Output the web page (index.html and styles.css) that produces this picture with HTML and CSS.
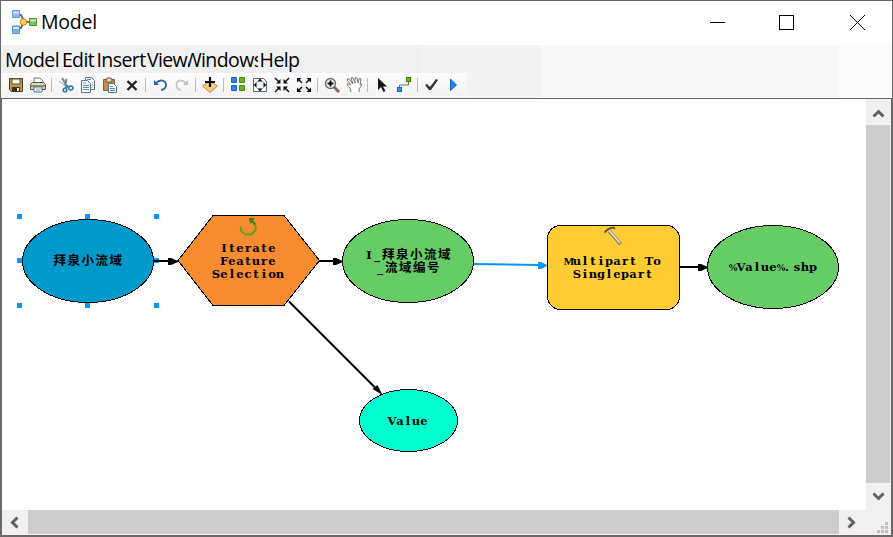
FILE: index.html
```html
<!DOCTYPE html>
<html lang="en">
<head>
<meta charset="utf-8">
<title>Model</title>
<link rel="stylesheet" href="styles.css">
</head>
<body>
<div class="window">
  <header class="titlebar">
    <svg class="logo" width="26" height="26" viewBox="0 0 26 26">
      <path d="M8 6h2l3 6-3 7H8M14 13h6" fill="none" stroke="#526b7c" stroke-width="1.800"/>
      <path d="M1.500 1.500h7v7h-7z" fill="#8fc1ee" stroke="#5f9bd2"/>
      <path d="M1.500 17h7v7.500h-7z" fill="#79b3e9" stroke="#4f8fcb"/>
      <path d="M2 3.500h6M2 19h6" stroke="#d0e8fb" stroke-width="2"/>
      <circle cx="12.500" cy="13" r="3.300" fill="#ffd24c" stroke="#b98518"/>
      <path d="M18.500 9.500h7v7h-7z" fill="#78bf59" stroke="#4a9436"/>
      <path d="M19 11.500h6" stroke="#c2e8ae" stroke-width="2"/>
    </svg>
    <h1 class="title">Model</h1>
    <div class="controls">
      <svg width="70" height="44" viewBox="0 0 70 44"><path d="M28 21.500h15"/></svg>
      <svg width="70" height="44" viewBox="0 0 70 44"><rect x="27.500" y="14.500" width="14" height="14"/></svg>
      <svg width="70" height="44" viewBox="0 0 70 44"><path d="M28 14l15 15M43 14L28 29"/></svg>
    </div>
  </header>
  <nav class="menu">
    <span class="m-model">Model</span><span class="m-edit">Edit</span><span class="m-insert">Insert</span><span class="m-view">View</span><span class="m-windows">Windows</span><span class="m-help">Help</span>
  </nav>
  <div class="toolrow">
    <div class="toolbar">
      <svg viewBox="0 0 16 16"><path d="M1.500 1.500h13v13h-11l-2-2z" fill="#b49b45" stroke="#493d20"/><path d="M4 2h8v5H4z" fill="#f4f4ee" stroke="#665a34"/><path d="M4 10h8v4H4z" fill="#342d20"/><path d="M9 11h2v3H9z" fill="#fff"/></svg>
      <svg viewBox="0 0 16 16"><path d="M4 7V1h6l3 3v3" fill="#fff" stroke="#6c7580"/><path d="M.500 7.500l2-2h11l2 2v5H.500z" fill="#d8d7b8" stroke="#54533f"/><path d="M1 9h14" stroke="#44443a"/><path d="M4 10h8v5H4z" fill="#fff" stroke="#596d80"/><path d="M6 12h5M6 14h4" stroke="#69a4dd"/></svg>
      <i class="sep"></i>
      <svg viewBox="0 0 16 16"><path d="M4 1l6 10M8.500 2L7 9" fill="none" stroke="#7d858c" stroke-width="2"/><path d="M1 4l8 6" stroke="#a0a5a8"/><circle cx="7" cy="13" r="1.800" fill="none" stroke="#2877b8" stroke-width="1.500"/><circle cx="12.800" cy="11" r="2" fill="none" stroke="#2877b8" stroke-width="1.500"/><path d="M7 11l2-2 2 1" fill="none" stroke="#2877b8" stroke-width="1.500"/></svg>
      <svg viewBox="0 0 16 16"><g fill="#fff" stroke="#60717f"><path d="M5.500.500h6l3 3v9h-9z"/><path d="M1.500 3.500h6l3 3v9h-9z"/></g><path d="M3 6h3M3 8.500h6M3 10.500h6M3 12.500h6M7 2.500h4M12 6h1M12 8h1M12 10h1" stroke="#4b95ca"/></svg>
      <svg viewBox="0 0 16 16"><path d="M1.500 2.500h11v11h-11z" fill="#c98d4b" stroke="#8f5b29"/><path d="M4 3l1-2h4l1 2v2H4z" fill="#e7d9b8" stroke="#785632"/><path d="M6.500 6.500h5l3 3v6h-8z" fill="#fff" stroke="#587084"/><path d="M8 9.500h3M8 11.500h5M8 13.500h5" stroke="#4b95ca"/></svg>
      <svg viewBox="0 0 16 16"><path d="M3.500 4l9 9M12.500 4l-9 9" stroke="#222" stroke-width="2.400"/></svg>
      <i class="sep"></i>
      <svg viewBox="0 0 16 16"><path d="M4 6c4-4 10-3 10 2 0 3-2 4.500-5 5" fill="none" stroke="#2869a8" stroke-width="1.800"/><path d="M2 3v5h5z" fill="#2869a8"/></svg>
      <svg viewBox="0 0 16 16"><path d="M12 6C8 2 2.500 3 2.500 8c0 3 2 4.500 4.500 5" fill="none" stroke="#c8c8c8" stroke-width="1.800"/><path d="M14 3v5H9z" fill="#c2c2c2"/></svg>
      <i class="sep"></i>
      <svg viewBox="0 0 16 16"><path d="M.500 9L8 4l7.500 5L8 15.500z" fill="#f5cf80" stroke="#bd8a43"/><path d="M8 0v10M3 5h10" stroke="#111" stroke-width="2.200"/></svg>
      <i class="sep"></i>
      <svg viewBox="0 0 16 16"><path d="M1.500.500h5v5h-5zM1.500 8.500h5v5h-5z" fill="#2987ea" stroke="#1766bd"/><path d="M9.500.500h5v5h-5z" fill="#6eb21b" stroke="#4c8b10"/><path d="M9.500 8.500h5v5h-5z" fill="#6eb21b" stroke="#4c8b10"/></svg>
      <svg viewBox="0 0 16 16"><path d="M1.500 1.500h10l3 3v10h-13z" fill="#fff" stroke="#5d646a"/><circle cx="8" cy="8" r="4.500" fill="#eef3f6" stroke="#a3adb5"/><path d="M8 1.500l2.500 3h-5zM8 14.500l2.500-3h-5zM1.500 8L4.500 5.500v5zM14.500 8l-3-2.500v5z" fill="#15191c"/></svg>
      <svg viewBox="0 0 16 16"><path d="M1 1l4 4M15 1l-4 4M1 15l4-4M15 15l-4-4" stroke="#111" stroke-width="1.500"/><path d="M6.500 2v4.500H2zM9.500 2v4.500H14zM6.500 14V9.500H2zM9.500 14V9.500H14z" fill="#111"/></svg>
      <svg viewBox="0 0 16 16"><path d="M2 2l4 4M14 2l-4 4M2 14l4-4M14 14l-4-4" stroke="#111" stroke-width="1.500"/><path d="M1 5.500V1h4.500zM10.500 1H15v4.500zM1 10.500V15h4.500zM10.500 15H15v-4.500z" fill="#111"/></svg>
      <i class="sep"></i>
      <svg viewBox="0 0 16 16"><path d="M10 10l5 5" stroke="#9e5e4d" stroke-width="3"/><circle cx="6.500" cy="6.500" r="5" fill="#f4f8fa" stroke="#626970" stroke-width="1.300"/><path d="M6.500 3.500v6M3.500 6.500h6" stroke="#111" stroke-width="2"/></svg>
      <svg viewBox="0 0 16 16"><path d="M5 15l-1-4-3-3q0-2 2-1l2 1-4-5q0-2 2-1l4 5-2-6q1-1 2 0l2 5V1q1-1 2 0l1 5 1-4q1-1 2 0l-1 6 1-1q2-1 1 1l-3 4v3" fill="#fff" stroke="#737373"/></svg>
      <i class="sep"></i>
      <svg viewBox="0 0 16 16"><path d="M4 1v12l3-3 2.500 5 2-1-2.500-4.500h4z" fill="#151515"/></svg>
      <svg viewBox="0 0 16 16"><path d="M3.500 11V8h9V4" fill="none" stroke="#6f7476"/><path d="M3.500 11V9M12.500 7V4" stroke="#e03829"/><rect x="1.500" y="10.500" width="4" height="4" fill="#2f93f1" stroke="#1668bb"/><rect x="10.500" y=".5" width="4" height="4" fill="#69b80d" stroke="#3c8008"/></svg>
      <i class="sep"></i>
      <svg viewBox="0 0 16 16"><path d="M1 8l2-1 3 3 6-8 2 1-7 10H5z" fill="#333"/></svg>
      <svg viewBox="0 0 16 16"><path d="M4.500 2L10.500 8l-6 5.500z" fill="#2583e9" stroke="#1565c4"/></svg>
    </div>
  </div>
  <main class="workspace">
    <svg class="diagram" width="864" height="411" viewBox="2 99 864 411">
      <g stroke="#000" stroke-width="2" fill="#000">
        <path d="M319 261h15M680 267h20M289 301.500l86 86"/>
        <path stroke="none" d="M333 258h3l8 3.500-8 3.500h-3zM698 264h3l8 3.500-8 3.500h-3zM372.500 389l5-4 5 10z"/>
      </g>
      <path d="M474 264l65 1" stroke="#0996ff" stroke-width="2"/>
      <path d="M538 262h3l7 3.500-7 3.500h-3z" fill="#0996ff"/>
      <path class="handles" d="M17 214h5v5h-5zM85 214h5v5h-5zM154 214h5v5h-5zM17 258h5v5h-5zM154 258h5v5h-5zM17 303h5v5h-5zM85 303h5v5h-5zM154 303h5v5h-5z"/>
      <g class="shapes">
        <ellipse cx="88" cy="261" rx="65.500" ry="41.500" fill="#0099cc"/>
        <path d="M178 260.500l35-45h71l35.500 45-35.500 45h-71z" fill="#f68b30"/>
        <ellipse cx="408" cy="261" rx="65.500" ry="41.500" fill="#66cc66"/>
        <rect x="547.500" y="225.500" width="132" height="84" rx="13" fill="#ffcc33"/>
        <ellipse cx="773" cy="267" rx="65.500" ry="41.500" fill="#66cc66"/>
        <ellipse cx="408.500" cy="420.500" rx="49" ry="31" fill="#00ffcf"/>
      </g>
      <path d="M154 261h16" stroke="#000" stroke-width="2"/>
      <path d="M168 258h3l8 3.500-8 3.500h-3z"/>
      <path d="M241 226.500c-1.500 5 3 8 7 8 6 0 9-5 7-10q-1-3-4-4" fill="none" stroke="#5f9e24" stroke-width="2"/>
      <path d="M249 218h6l-1 1-1 2 3 3-2 1-2-3-2 2z" fill="#3f7b1b"/>
      <path d="M609 231l11.500 13" stroke="#847c6b" stroke-width="3.400"/>
      <path d="M609 230.500l11 12.500" stroke="#eee4c6" stroke-width="1.700"/>
      <path d="M605 233l3-3 4-2 3 1-1-2-5 1-4 3z" fill="#555" stroke="#555"/>
      <g class="labels">
        <text class="cjk" x="53.500" y="265">拜泉小流域</text>
        <text x="224 232 240 248 256 264 272" y="252">Iterate</text>
        <text x="224 232 240 248 256 264 272" y="265">Feature</text>
        <text x="216 224 232 240 248 256 264 272 280" y="278">Selection</text>
        <text x="369 377" y="259">I_</text><text class="cjk" x="382" y="259">拜泉小流域</text>
        <text x="380" y="272">_</text><text class="cjk" x="385" y="272">流域编号</text>
        <text x="569 577 585 593 601 609 617 625 633 641 649 657" y="265"><tspan class="wide">M</tspan>ultipart To</text>
        <text x="577 585 593 601 609 617 625 633 641 649" y="278">Singlepart</text>
        <text x="733 741 749 757 765 773 781 787 797 805 813" y="271"><tspan class="pct">%</tspan>Value<tspan class="pct">%</tspan>.shp</text>
        <text x="392 400 408 416 424" y="425">Value</text>
      </g>
    </svg>
    <div class="vbar">
      <svg width="25" height="26" viewBox="0 0 25 26"><path d="M7.500 17.500l5-5 5 5"/></svg>
      <div class="vthumb"></div>
      <svg width="25" height="27" viewBox="0 0 25 27"><path d="M7.500 10.500l5 5 5-5"/></svg>
    </div>
    <div class="hbar">
      <svg width="26" height="24" viewBox="0 0 26 24"><path d="M15.500 7.500l-5 5 5 5"/></svg>
      <div class="hthumb"></div>
      <svg width="27" height="24" viewBox="0 0 27 24"><path d="M9.500 7.500l5 5-5 5"/></svg>
    </div>
    <svg class="grip" width="25" height="25" viewBox="0 0 25 25"><path d="M19 12h3v3h-3zM15 16h3v3h-3zM19 16h3v3h-3zM11 20h3v3h-3zM15 20h3v3h-3zM19 20h3v3h-3z"/></svg>
  </main>
</div>
</body>
</html>
```
FILE: styles.css
```css
* { box-sizing: border-box; }
body { margin: 0; background: #fff; }
svg { display: block; flex: none; }
.window {
  width: 893px;
  height: 537px;
  border: 1px solid #6b6869;
  border-bottom-width: 2px;
  display: flex;
  flex-direction: column;
  overflow: hidden;
  font-family: "Open Sans", "Noto Sans", sans-serif;
  color: #000;
}
.titlebar { height: 44px; display: flex; align-items: center; padding-left: 10px; flex: none; }
.logo { margin-bottom: 2px; }
.title { margin: 0 0 2px 4px; font-size: 19.5px; font-weight: 400; letter-spacing: -0.25px; line-height: 30px; }
.controls { display: flex; margin-left: auto; }
.controls svg { fill: none; stroke: #000; stroke-width: 1; }
.menu {
  height: 28px;
  flex: none;
  display: flex;
  padding-left: 3px;
  font-size: 19.5px;
  line-height: 29px;
  letter-spacing: -0.6px;
  background: linear-gradient(90deg, #f0f0f0 0 420px, #f3f3f3 420px 540px, #f8f8f8 540px 837px, #fbfbfb 837px);
}
.menu span { overflow: hidden; white-space: nowrap; display: flex; justify-content: center; }
.m-model { width: 56px; }
.m-edit { width: 36px; }
.m-insert { width: 50px; }
.m-view { width: 42px; }
.m-windows { width: 70px; }
.m-help { width: 43px; }
.toolrow {
  height: 25px;
  flex: none;
  background: linear-gradient(90deg, #f3f3f3 0 540px, #f8f8f8 540px 837px, #fbfbfb 837px);
}
.toolbar {
  width: 466px;
  height: 24px;
  padding-left: 4px;
  display: flex;
  align-items: center;
  background: linear-gradient(#fdfdfd, #f3f3f3);
}
.toolbar svg { width: 16px; height: 16px; margin: 0 3px; }
.sep { width: 6px; height: 14px; flex: none; background: linear-gradient(#bdbdbd, #bdbdbd) 2px 0 / 1px 14px no-repeat; }
.workspace {
  height: 437px;
  flex: none;
  display: grid;
  grid-template-columns: 864px 25px;
  grid-template-rows: 411px 25px;
  border: solid #6b6869;
  border-width: 1px 1px 0;
  background: #f0f0f0;
}
.diagram { background: #fff; }
.vbar { display: flex; flex-direction: column; }
.vthumb { flex: 1; width: 24px; background: #cdcdcd; }
.hbar { display: flex; }
.hthumb { flex: 1; height: 24px; background: #cdcdcd; }
.vbar path, .hbar path { fill: none; stroke: #606060; stroke-width: 3; }
.grip path { fill: #bfbfbf; }
.handles { fill: #0996ff; shape-rendering: crispEdges; }
.shapes { stroke: #000; stroke-width: 1; shape-rendering: crispEdges; }
.labels text {
  font-family: "DejaVu Serif", serif;
  font-size: 11.5px;
  font-weight: 700;
  text-anchor: middle;
}
.labels .cjk { font-family: "Noto Sans CJK SC", sans-serif; font-size: 12.5px; letter-spacing: 1.5px; text-anchor: start; }
.labels .wide { font-family: "Liberation Serif", serif; font-size: 11px; }
.labels .pct { font-family: "Liberation Serif", serif; font-size: 10px; }
```
